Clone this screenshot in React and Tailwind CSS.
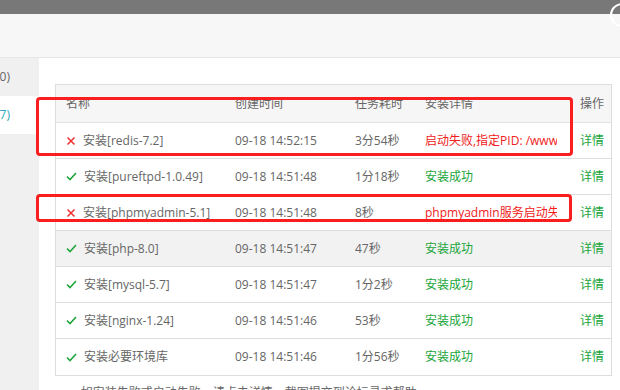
import React from "react";

const rows = [
  { ok: false, name: "安装[redis-7.2]", time: "09-18 14:52:15", dur: "3分54秒", detail: "启动失败,指定PID: /www/server/redis/redis.pid" },
  { ok: true, name: "安装[pureftpd-1.0.49]", time: "09-18 14:51:48", dur: "1分18秒", detail: "安装成功" },
  { ok: false, name: "安装[phpmyadmin-5.1]", time: "09-18 14:51:48", dur: "8秒", detail: "phpmyadmin服务启动失败" },
  { ok: true, name: "安装[php-8.0]", time: "09-18 14:51:47", dur: "47秒", detail: "安装成功", hover: true },
  { ok: true, name: "安装[mysql-5.7]", time: "09-18 14:51:47", dur: "1分2秒", detail: "安装成功" },
  { ok: true, name: "安装[nginx-1.24]", time: "09-18 14:51:46", dur: "53秒", detail: "安装成功" },
  { ok: true, name: "安装必要环境库", time: "09-18 14:51:46", dur: "1分56秒", detail: "安装成功" },
];

function Check() {
  return (
    <svg width="11" height="9" viewBox="0 0 11 9" className="shrink-0">
      <path d="M1 4.5 L4 7.5 L10 1" fill="none" stroke="#20a53a" strokeWidth="1.6" />
    </svg>
  );
}

function Cross() {
  return (
    <svg width="10" height="10" viewBox="0 0 10 10" className="shrink-0">
      <path d="M1.5 1.5 L8.5 8.5 M8.5 1.5 L1.5 8.5" fill="none" stroke="#f03030" strokeWidth="1.5" />
    </svg>
  );
}

export default function App() {
  return (
    <div
      className="relative w-[620px] h-[390px] overflow-hidden bg-white text-[12px] text-[#666]"
      style={{ fontFamily: '"Open Sans", "Noto Sans CJK SC", sans-serif' }}
    >
      <div className="h-[14px] bg-[#787878]" />
      <div className="h-[44px] bg-[#f7f7f7] border-b border-[#e6e6e6]" />
      <div className="flex h-[332px]">
        <div className="w-[39px] shrink-0 bg-[#f0f0f0] flex flex-col">
          <div className="h-[38px] flex items-center">
            <div className="w-[10px] flex justify-end overflow-hidden whitespace-nowrap text-[#666]">全部(10)</div>
          </div>
          <div className="h-[38px] flex items-center bg-white">
            <div className="w-[10px] flex justify-end overflow-hidden whitespace-nowrap text-[#2aa8bc]">消息(7)</div>
          </div>
        </div>
        <div className="flex-1 pl-[16px] pt-[26px] pr-[8px]">
          <div className="border border-[#dddddd]">
            <div className="flex h-[38px] items-center bg-[#f6f6f6] border-b border-[#e2e2e2]">
              <div className="w-[169px] pl-[10px]">名称</div>
              <div className="w-[120px] pl-[10px]">创建时间</div>
              <div className="w-[70px] pl-[10px]">任务耗时</div>
              <div className="w-[155px] pl-[10px]">安装详情</div>
              <div className="flex-1 pl-[10px]">操作</div>
            </div>
            {rows.map((r, i) => (
              <div
                key={i}
                className={
                  "flex h-[36px] items-center " +
                  (i < rows.length - 1 ? "border-b border-[#dddddd] " : "") +
                  (r.hover ? "bg-[#f2f2f2]" : "bg-white")
                }
              >
                <div className="w-[169px] pl-[10px] flex items-center gap-[7px] whitespace-nowrap">
                  {r.ok ? <Check /> : <Cross />}
                  <span>{r.name}</span>
                </div>
                <div className="w-[120px] pl-[10px] whitespace-nowrap">{r.time}</div>
                <div className="w-[70px] pl-[10px] whitespace-nowrap">{r.dur}</div>
                <div className="w-[155px] pl-[10px]">
                  <div className={"w-[132px] overflow-hidden whitespace-nowrap " + (r.ok ? "text-[#20a53a]" : "text-[#f02020]")}>
                    {r.detail}
                  </div>
                </div>
                <div className="flex-1 pl-[10px] text-[#20a53a] whitespace-nowrap">详情</div>
              </div>
            ))}
          </div>
          <div className="pl-[18px] pt-[8px] whitespace-nowrap text-[#666]">• 如安装失败或启动失败，请点击详情，截图提交到论坛寻求帮助</div>
        </div>
      </div>

      <div className="absolute left-[36px] top-[97px] w-[537px] h-[59px] border-[3px] border-[#fa1e1e] rounded-[4px]" />
      <div className="absolute left-[36px] top-[194px] w-[536px] h-[28px] border-[3px] border-[#fa1e1e] rounded-[4px]" />
      <div className="absolute left-[610px] top-[3px] w-[24px] h-[24px] rounded-full border-2 border-white" />
    </div>
  );
}
